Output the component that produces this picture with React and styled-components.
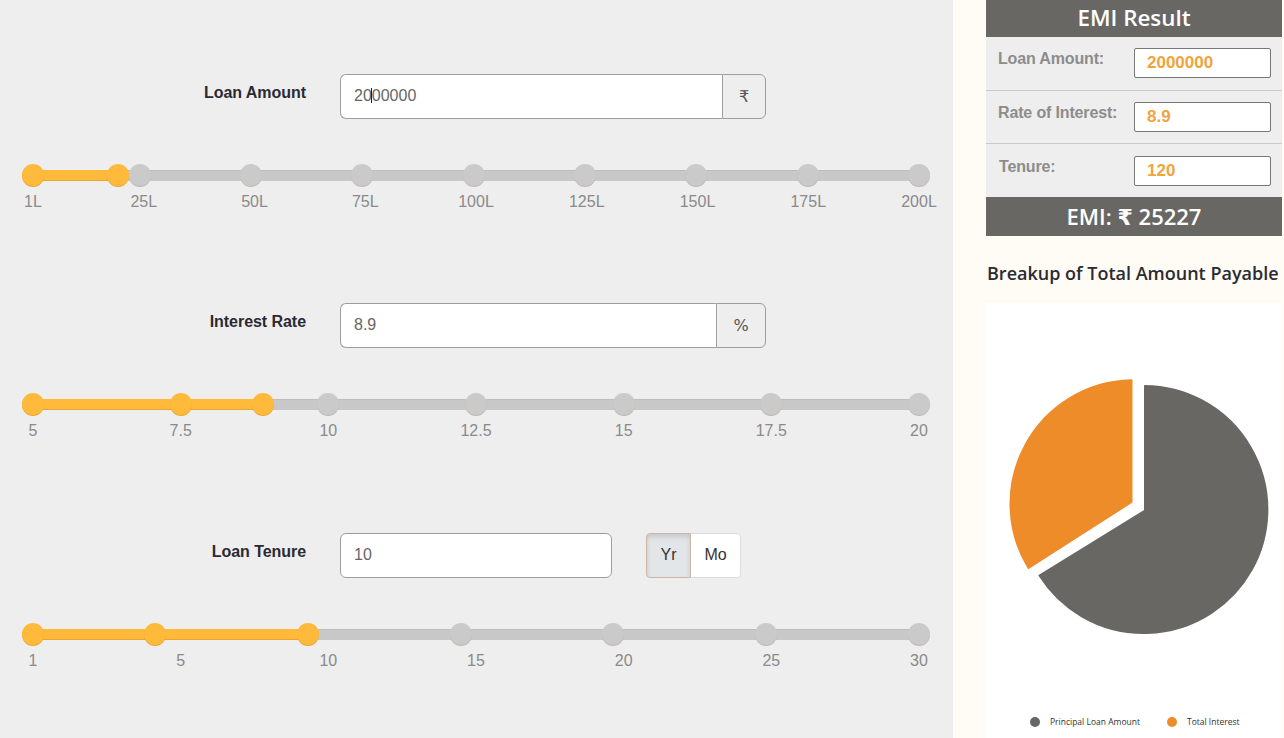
import styled, { createGlobalStyle } from "styled-components";

const GlobalStyle = createGlobalStyle`
  html, body {
    margin: 0;
    padding: 0;
    height: 738px;
    overflow: hidden;
    background: #fffcf5;
    font-family: "Liberation Sans", Arial, sans-serif;
  }
  * {
    box-sizing: border-box;
  }
`;

const pct = (value, min, max) => ((value - min) / (max - min)) * 100;

const sliders = [
  {
    title: "Loan Amount",
    value: "2000000",
    addon: "₹",
    addonWidth: 44,
    caret: true,
    min: 1,
    max: 200,
    current: 20,
    ticks: [1, 25, 50, 75, 100, 125, 150, 175, 200],
    labels: ["1L", "25L", "50L", "75L", "100L", "125L", "150L", "175L", "200L"],
  },
  {
    title: "Interest Rate",
    value: "8.9",
    addon: "%",
    addonWidth: 50,
    min: 5,
    max: 20,
    current: 8.9,
    ticks: [5, 7.5, 10, 12.5, 15, 17.5, 20],
    labels: ["5", "7.5", "10", "12.5", "15", "17.5", "20"],
  },
  {
    title: "Loan Tenure",
    value: "10",
    toggle: true,
    min: 1,
    max: 30,
    current: 10,
    ticks: [1, 5, 15, 20, 25, 30],
    labels: ["1", "5", "10", "15", "20", "25", "30"],
  },
];

const results = [
  { label: "Loan Amount:", value: "2000000", height: 54, pad: 11 },
  { label: "Rate of Interest:", value: "8.9", height: 53, pad: 11 },
  { label: "Tenure:", value: "120", height: 53, pad: 12, nudge: true },
];

const App = () => {
  return (
    <>
      <GlobalStyle />
      <Page>
        <Calculator>
          {sliders.map((s) => (
            <Section key={s.title}>
              <FieldRow>
                <FieldLabel>{s.title}</FieldLabel>
                <InputGroup $wide={!s.toggle}>
                  <AmountInput defaultValue={s.value} readOnly $joined={!!s.addon} />
                  {s.caret && <Caret />}
                  {s.addon && <Addon $width={s.addonWidth}>{s.addon}</Addon>}
                </InputGroup>
                {s.toggle && (
                  <Toggle>
                    <ToggleButton $active>Yr</ToggleButton>
                    <ToggleButton>Mo</ToggleButton>
                  </Toggle>
                )}
              </FieldRow>
              <Slider>
                <Track>
                  <Fill style={{ width: `${pct(s.current, s.min, s.max)}%` }} />
                </Track>
                {s.ticks.map((t) => (
                  <Dot
                    key={t}
                    $on={t <= s.current}
                    style={{ left: `${pct(t, s.min, s.max)}%` }}
                  />
                ))}
                <Dot $on style={{ left: `${pct(s.current, s.min, s.max)}%` }} />
              </Slider>
              <TickRow>
                {s.labels.map((l) => (
                  <Tick key={l}>{l}</Tick>
                ))}
              </TickRow>
            </Section>
          ))}
        </Calculator>

        <Sidebar>
          <ResultHead>EMI Result</ResultHead>
          {results.map((r) => (
            <ResultRow key={r.label} $height={r.height} $pad={r.pad}>
              <ResultLabel $nudge={r.nudge}>{r.label}</ResultLabel>
              <ResultInput defaultValue={r.value} readOnly />
            </ResultRow>
          ))}
          <EmiBar>EMI: ₹ 25227</EmiBar>
          <ChartTitle>Breakup of Total Amount Payable</ChartTitle>
          <ChartBox>
            <PieSvg viewBox="0 0 296 405" width="296" height="405">
              <path
                d="M159 207.5 L159 83 A123.5 123.5 0 1 1 53.5 272.5 Z"
                fill="#696763"
                stroke="#696763"
                strokeWidth="2"
                strokeLinejoin="round"
              />
              <path
                d="M145.5 199 L145.5 77.3 A123.5 123.5 0 0 0 42.5 265 Z"
                fill="#ee8c2a"
                stroke="#ee8c2a"
                strokeWidth="2"
                strokeLinejoin="round"
              />
            </PieSvg>
            <Legend>
              <LegendItem $color="#696763">Principal Loan Amount</LegendItem>
              <LegendItem $color="#ee8c2a">Total Interest</LegendItem>
            </Legend>
          </ChartBox>
        </Sidebar>
      </Page>
    </>
  );
};

const Page = styled.div`
  display: flex;
  width: 1284px;
  height: 738px;
  overflow: hidden;
  background: #fffcf5;
`;

const Calculator = styled.main`
  width: 953px;
  flex: none;
  height: 738px;
  padding-top: 73.9px;
  background: #eeeeee;
`;

const Section = styled.section`
  height: 229.5px;
`;

const FieldRow = styled.div`
  display: flex;
  align-items: flex-start;
  height: 45px;
`;

const FieldLabel = styled.label`
  width: 306px;
  margin-right: 34px;
  padding-top: 10px;
  text-align: right;
  font-size: 16px;
  line-height: 18px;
  font-weight: 700;
  letter-spacing: -0.05px;
  color: #2b2a33;
`;

const InputGroup = styled.div`
  position: relative;
  display: flex;
  width: ${(p) => (p.$wide ? "426px" : "272px")};
  height: 45px;
`;

const AmountInput = styled.input`
  flex: 1;
  min-width: 0;
  height: 45px;
  padding: 0 13px 1px;
  border: 1px solid #9e9e9e;
  border-radius: ${(p) => (p.$joined ? "6px 0 0 6px" : "6px")};
  border-right-width: ${(p) => (p.$joined ? "0" : "1px")};
  background: #fff;
  font-family: "Liberation Sans", Arial, sans-serif;
  font-size: 16px;
  color: #666;
  outline: none;
`;

const Caret = styled.span`
  position: absolute;
  left: 31px;
  top: 14px;
  width: 1px;
  height: 15px;
  background: #222;
`;

const Addon = styled.span`
  display: flex;
  flex: none;
  align-items: center;
  justify-content: center;
  width: ${(p) => p.$width}px;
  border: 1px solid #9e9e9e;
  border-radius: 0 6px 6px 0;
  background: #eeeeee;
  font-family: "DejaVu Sans", sans-serif;
  font-size: 16px;
  color: #555;
`;

const Toggle = styled.div`
  display: flex;
  width: 95px;
  height: 45px;
  margin-left: 34px;
`;

const ToggleButton = styled.button`
  flex: ${(p) => (p.$active ? "0 0 45px" : "1")};
  padding: 0;
  border: 1px solid ${(p) => (p.$active ? "#cbb5a6" : "#dddddd")};
  border-left-width: ${(p) => (p.$active ? "1px" : "0")};
  border-radius: ${(p) => (p.$active ? "4px 0 0 4px" : "0 4px 4px 0")};
  background: ${(p) => (p.$active ? "#e3e6e8" : "#fff")};
  box-shadow: ${(p) => (p.$active ? "inset 0 3px 5px rgba(0, 0, 0, 0.125)" : "none")};
  font-family: "Liberation Sans", Arial, sans-serif;
  font-size: 16px;
  color: #333;
`;

const Slider = styled.div`
  position: relative;
  width: 886px;
  height: 22px;
  padding-top: 6px;
  margin: 45px 0 0 33px;
`;

const Track = styled.div`
  width: 100%;
  height: 11px;
  background: #c8c8c8;
  box-shadow: inset 0 1px 0 #bdbdbd;
`;

const Fill = styled.div`
  height: 11px;
  background: #ffba3b;
  box-shadow: inset 0 -1px 0 #e8a62f;
`;

const Dot = styled.span`
  position: absolute;
  top: 0;
  width: 22px;
  height: 22px;
  margin-left: -11px;
  border-radius: 50%;
  background: ${(p) => (p.$on ? "#ffba3b" : "#cacaca")};
  box-shadow: 0 1px 0 ${(p) => (p.$on ? "#e8a62f" : "#bfb8b2")};
`;

const TickRow = styled.div`
  display: flex;
  justify-content: space-between;
  width: 886px;
  margin: 7px 0 0 33px;
`;

const Tick = styled.span`
  display: flex;
  justify-content: center;
  width: 0;
  white-space: nowrap;
  font-size: 16px;
  line-height: 18px;
  color: #8a8a8a;
`;

const Sidebar = styled.aside`
  width: 296px;
  flex: none;
  margin-left: 33px;
  height: 738px;
`;

const ResultHead = styled.h2`
  margin: 0;
  height: 37px;
  background: #696763;
  color: #fff;
  text-align: center;
  font-family: "Open Sans", sans-serif;
  font-size: 22.4px;
  font-weight: 600;
  line-height: 35px;
`;

const ResultRow = styled.div`
  display: flex;
  justify-content: space-between;
  align-items: flex-start;
  height: ${(p) => p.$height}px;
  padding: ${(p) => p.$pad}px 11px 0 12px;
  background: #eeeeee;
  border-bottom: 1px solid #c9c9c9;

  &:nth-of-type(3) {
    border-bottom: 0;
  }
`;

const ResultLabel = styled.span`
  margin: 1px 0 0 ${(p) => (p.$nudge ? "1px" : "0")};
  font-size: 16px;
  line-height: 20px;
  font-weight: 700;
  letter-spacing: -0.15px;
  color: #8c8c8c;
`;

const ResultInput = styled.input`
  width: 137px;
  height: 30px;
  padding: 0 12px;
  border: 1px solid #777;
  border-radius: 2px;
  background: #fff;
  font-family: "Liberation Sans", Arial, sans-serif;
  font-size: 17px;
  font-weight: 700;
  color: #f2a33c;
  outline: none;
`;

const EmiBar = styled.div`
  height: 39px;
  background: #696763;
  color: #fff;
  text-align: center;
  font-family: "Open Sans", "DejaVu Sans", sans-serif;
  font-size: 22px;
  font-weight: 600;
  line-height: 39px;
`;

const ChartTitle = styled.h3`
  margin: 0;
  height: 67px;
  padding: 25px 0 0 1px;
  white-space: nowrap;
  font-family: "Open Sans", sans-serif;
  font-size: 18px;
  font-weight: 600;
  line-height: 24px;
  color: #2b2a33;
`;

const ChartBox = styled.div`
  height: 435px;
  background: #fff;
`;

const PieSvg = styled.svg`
  display: block;
`;

const Legend = styled.div`
  display: flex;
  height: 27px;
  align-items: center;
  gap: 27px;
  padding-left: 44px;
`;

const LegendItem = styled.span`
  display: flex;
  align-items: center;
  gap: 10px;
  font-family: "Open Sans", sans-serif;
  font-size: 8.5px;
  color: #333;

  &::before {
    content: "";
    width: 10px;
    height: 10px;
    border-radius: 50%;
    background: ${(p) => p.$color};
  }
`;

export default App;
